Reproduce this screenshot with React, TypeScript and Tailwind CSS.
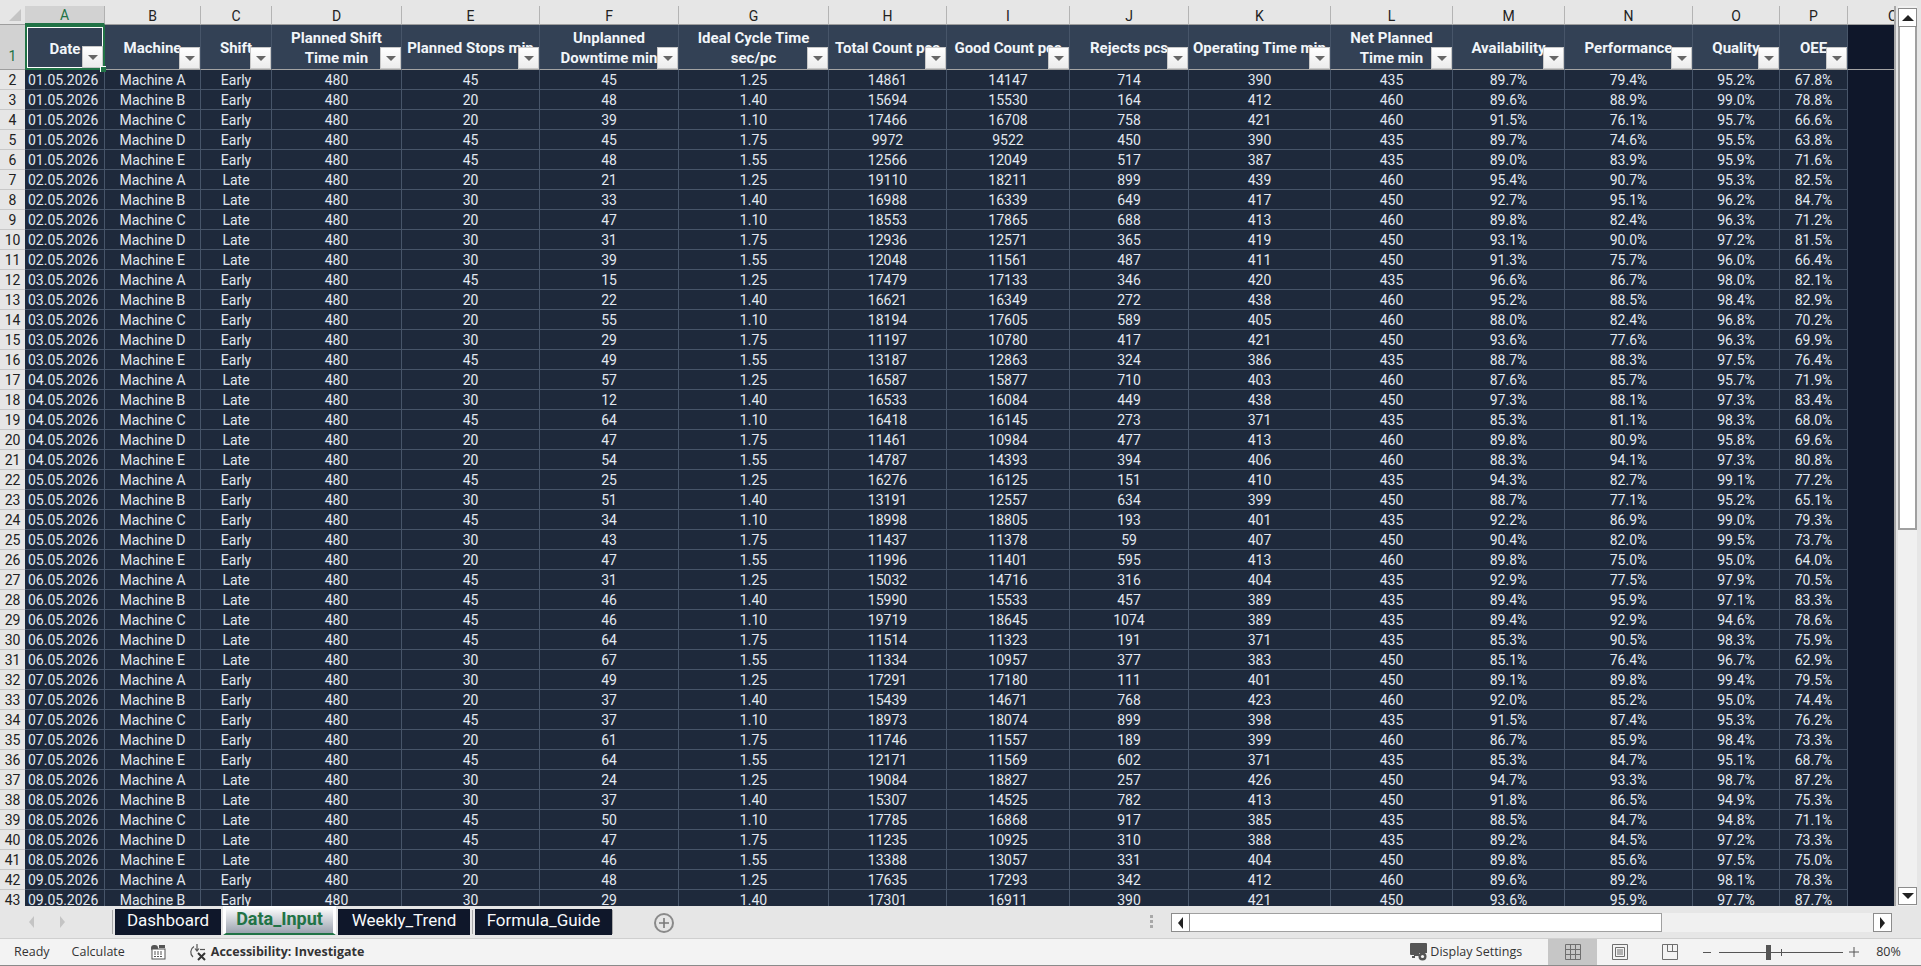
import React from 'react';

const letters = ['A', 'B', 'C', 'D', 'E', 'F', 'G', 'H', 'I', 'J', 'K', 'L', 'M', 'N', 'O', 'P'];

const headers = [
  'Date',
  'Machine',
  'Shift',
  'Planned Shift\nTime min',
  'Planned Stops min',
  'Unplanned\nDowntime min',
  'Ideal Cycle Time\nsec/pc',
  'Total Count pcs',
  'Good Count pcs',
  'Rejects pcs',
  'Operating Time min',
  'Net Planned\nTime min',
  'Availability',
  'Performance',
  'Quality',
  'OEE',
];

// date | machine | shift | stops | downtime | cycle | total | good | rejects | operating | net | A | P | Q | OEE
const raw = `01|A|Early|45|45|1.25|14861|14147|714|390|435|89.7|79.4|95.2|67.8
01|B|Early|20|48|1.40|15694|15530|164|412|460|89.6|88.9|99.0|78.8
01|C|Early|20|39|1.10|17466|16708|758|421|460|91.5|76.1|95.7|66.6
01|D|Early|45|45|1.75|9972|9522|450|390|435|89.7|74.6|95.5|63.8
01|E|Early|45|48|1.55|12566|12049|517|387|435|89.0|83.9|95.9|71.6
02|A|Late|20|21|1.25|19110|18211|899|439|460|95.4|90.7|95.3|82.5
02|B|Late|30|33|1.40|16988|16339|649|417|450|92.7|95.1|96.2|84.7
02|C|Late|20|47|1.10|18553|17865|688|413|460|89.8|82.4|96.3|71.2
02|D|Late|30|31|1.75|12936|12571|365|419|450|93.1|90.0|97.2|81.5
02|E|Late|30|39|1.55|12048|11561|487|411|450|91.3|75.7|96.0|66.4
03|A|Early|45|15|1.25|17479|17133|346|420|435|96.6|86.7|98.0|82.1
03|B|Early|20|22|1.40|16621|16349|272|438|460|95.2|88.5|98.4|82.9
03|C|Early|20|55|1.10|18194|17605|589|405|460|88.0|82.4|96.8|70.2
03|D|Early|30|29|1.75|11197|10780|417|421|450|93.6|77.6|96.3|69.9
03|E|Early|45|49|1.55|13187|12863|324|386|435|88.7|88.3|97.5|76.4
04|A|Late|20|57|1.25|16587|15877|710|403|460|87.6|85.7|95.7|71.9
04|B|Late|30|12|1.40|16533|16084|449|438|450|97.3|88.1|97.3|83.4
04|C|Late|45|64|1.10|16418|16145|273|371|435|85.3|81.1|98.3|68.0
04|D|Late|20|47|1.75|11461|10984|477|413|460|89.8|80.9|95.8|69.6
04|E|Late|20|54|1.55|14787|14393|394|406|460|88.3|94.1|97.3|80.8
05|A|Early|45|25|1.25|16276|16125|151|410|435|94.3|82.7|99.1|77.2
05|B|Early|30|51|1.40|13191|12557|634|399|450|88.7|77.1|95.2|65.1
05|C|Early|45|34|1.10|18998|18805|193|401|435|92.2|86.9|99.0|79.3
05|D|Early|30|43|1.75|11437|11378|59|407|450|90.4|82.0|99.5|73.7
05|E|Early|20|47|1.55|11996|11401|595|413|460|89.8|75.0|95.0|64.0
06|A|Late|45|31|1.25|15032|14716|316|404|435|92.9|77.5|97.9|70.5
06|B|Late|45|46|1.40|15990|15533|457|389|435|89.4|95.9|97.1|83.3
06|C|Late|45|46|1.10|19719|18645|1074|389|435|89.4|92.9|94.6|78.6
06|D|Late|45|64|1.75|11514|11323|191|371|435|85.3|90.5|98.3|75.9
06|E|Late|30|67|1.55|11334|10957|377|383|450|85.1|76.4|96.7|62.9
07|A|Early|30|49|1.25|17291|17180|111|401|450|89.1|89.8|99.4|79.5
07|B|Early|20|37|1.40|15439|14671|768|423|460|92.0|85.2|95.0|74.4
07|C|Early|45|37|1.10|18973|18074|899|398|435|91.5|87.4|95.3|76.2
07|D|Early|20|61|1.75|11746|11557|189|399|460|86.7|85.9|98.4|73.3
07|E|Early|45|64|1.55|12171|11569|602|371|435|85.3|84.7|95.1|68.7
08|A|Late|30|24|1.25|19084|18827|257|426|450|94.7|93.3|98.7|87.2
08|B|Late|30|37|1.40|15307|14525|782|413|450|91.8|86.5|94.9|75.3
08|C|Late|45|50|1.10|17785|16868|917|385|435|88.5|84.7|94.8|71.1
08|D|Late|45|47|1.75|11235|10925|310|388|435|89.2|84.5|97.2|73.3
08|E|Late|30|46|1.55|13388|13057|331|404|450|89.8|85.6|97.5|75.0
09|A|Early|20|48|1.25|17635|17293|342|412|460|89.6|89.2|98.1|78.3
09|B|Early|30|29|1.40|17301|16911|390|421|450|93.6|95.9|97.7|87.7`;

const rows = raw.split('\n').map((line) => {
  const p = line.split('|');
  return [
    `${p[0]}.05.2026`,
    `Machine ${p[1]}`,
    p[2],
    '480',
    p[3],
    p[4],
    p[5],
    p[6],
    p[7],
    p[8],
    p[9],
    p[10],
    `${p[11]}%`,
    `${p[12]}%`,
    `${p[13]}%`,
    `${p[14]}%`,
  ];
});

const FilterButton = () => (
  <div className="absolute right-0 bottom-0 w-[21px] h-[22px] bg-gradient-to-b from-white to-[#ececec] border border-[#c8c8c8] flex items-center justify-center">
    <div className="w-0 h-0 border-x-[5px] border-x-transparent border-t-[5px] border-t-[#666666]" />
  </div>
);

const ArrowButton = ({ dir, className }: { dir: 'up' | 'down' | 'left' | 'right'; className: string }) => {
  const shape = {
    up: 'border-x-[6px] border-x-transparent border-b-[6px] border-b-[#222222]',
    down: 'border-x-[6px] border-x-transparent border-t-[6px] border-t-[#222222]',
    left: 'border-y-[6px] border-y-transparent border-r-[5px] border-r-[#222222]',
    right: 'border-y-[6px] border-y-transparent border-l-[5px] border-l-[#222222]',
  }[dir];
  return (
    <div className={`flex items-center justify-center bg-white border border-[#8c8c8c] ${className}`}>
      <div className={`w-0 h-0 ${shape}`} />
    </div>
  );
};

const Sheet = () => (
  <div className="flex-1 min-w-0 overflow-hidden bg-[#0f172a] grid content-start grid-cols-[25px_80px_96px_71px_130px_138px_139px_150px_118px_123px_119px_142px_122px_112px_128px_87px_68px_46px] grid-rows-[19px_45px] auto-rows-[20px] font-[Roboto,sans-serif] text-[14px]">
    {/* column letters */}
    <div className="bg-[#e6e6e6] border-b border-[#9e9e9e] relative overflow-hidden">
      <div className="absolute right-[4px] bottom-[3px] w-0 h-0 border-l-[12px] border-l-transparent border-b-[12px] border-b-[#c4c4c4]" />
    </div>
    {letters.map((l, i) => (
      <div
        key={l}
        className={
          i === 0
            ? 'bg-[#d2d2d2] border-b-2 border-b-[#217346] text-[#217346] flex items-center justify-center pt-[2px] text-[14px] border-r border-r-[#b0b0b0]'
            : 'bg-[#e6e6e6] border-b border-b-[#9e9e9e] text-[#222222] flex items-center justify-center pt-[2px] text-[14px] border-r border-r-[#b4b4b4]'
        }
      >
        {l}
      </div>
    ))}
    <div className="bg-[#e6e6e6] border-b border-[#9e9e9e] text-[#222222] overflow-hidden pl-10 pt-px text-[14px] leading-[19px]">
      Q
    </div>

    {/* header row */}
    <div className="bg-[#d2d2d2] border-b border-[#9e9e9e] flex items-end justify-center text-[#217346] pb-[2px] text-[14px]">
      1
    </div>
    {headers.map((h, i) => (
      <div
        key={h}
        className={
          i === 0
            ? 'relative z-10 bg-[#334155] border-2 border-[#217346] outline outline-1 -outline-offset-3 outline-white flex items-center justify-center pt-[2px] text-center font-bold text-[15px] text-[#f1f5f9] leading-[20px]'
            : 'relative bg-[#334155] border-r border-[#475569] border-b border-b-[#a3a3a3] flex items-center justify-center pt-[2px] text-center font-bold text-[15px] text-[#f1f5f9] leading-[20px]'
        }
      >
        <span className="whitespace-pre">{h}</span>
        <FilterButton />
        {i === 0 && (
          <div className="absolute -right-[3px] -bottom-[4px] w-[6px] h-[6px] bg-[#217346] border-l border-t border-white" />
        )}
      </div>
    ))}
    <div className="border-b border-[#a3a3a3]" />

    {/* data rows */}
    {rows.map((r, i) => (
      <React.Fragment key={i}>
        <div className="bg-[#e6e6e6] border-b border-[#c8c8c8] text-[#222222] flex items-center justify-center pt-[2px] text-[14px]">
          {i + 2}
        </div>
        {r.map((v, j) => (
          <div
            key={j}
            className={
              j === 0
                ? 'bg-[#1e293b] border-r border-b border-[#475569] text-[#e2e8f0] flex items-center pt-[2px] pl-[3px] whitespace-nowrap'
                : 'bg-[#1e293b] border-r border-b border-[#475569] text-[#e2e8f0] flex items-center justify-center pt-[2px] whitespace-nowrap'
            }
          >
            {v}
          </div>
        ))}
        <div />
      </React.Fragment>
    ))}
  </div>
);

const VerticalScrollbar = () => (
  <div className="w-[27px] shrink-0 flex bg-[#e6e6e6]">
    <div className="w-[2px] bg-[#a8a8a8]" />
    <div className="w-[2px]" />
    <div className="w-[19px] flex flex-col bg-[#f0f0f0]">
      <ArrowButton dir="up" className="h-[19px] mt-[2px] shrink-0" />
      <div className="h-[503px] bg-white border-2 border-t-0 border-[#a0a0a0]" />
      <div className="flex-1" />
      <ArrowButton dir="down" className="h-[18px] mb-[1px] shrink-0" />
    </div>
    <div className="w-[4px]" />
  </div>
);

const SheetTab = ({ label }: { label: string }) => (
  <div className="h-[26px] mt-[3px] pb-[3px] bg-[#0f172a] text-[#f8fafc] flex items-center justify-center text-[17px] leading-none">
    {label}
  </div>
);

const TabBar = () => (
  <div className="h-[32px] bg-[#e6e6e6] flex items-start font-[Roboto,sans-serif] shrink-0">
    <div className="w-[112px] h-full flex items-center pl-[29px] gap-[26px]">
      <div className="w-0 h-0 border-y-[6px] border-y-transparent border-r-[5px] border-r-[#c4c4c4]" />
      <div className="w-0 h-0 border-y-[6px] border-y-transparent border-l-[5px] border-l-[#c4c4c4]" />
    </div>
    <div className="w-px h-[24px] mt-[4px] bg-[#a8a8a8] mr-[2px]" />
    <div className="w-[106px]">
      <SheetTab label="Dashboard" />
    </div>
    <div className="w-[113px] h-[29px] ml-[2px] bg-white border-x-[3px] border-t border-white border-b-2 border-b-[#217346] mr-[2px]">
      <div className="h-full pb-[2px] bg-gradient-to-b from-white to-[#9ca3af] text-[#217346] font-bold text-[18px] flex items-center justify-center leading-none">
        Data_Input
      </div>
    </div>
    <div className="w-[132px]">
      <SheetTab label="Weekly_Trend" />
    </div>
    <div className="w-px h-[24px] mt-[4px] bg-[#a8a8a8] mx-[2px]" />
    <div className="w-[137px]">
      <SheetTab label="Formula_Guide" />
    </div>
    <div className="w-px h-[24px] mt-[4px] bg-[#a8a8a8]" />
    <div className="w-[20px] h-[20px] mt-[7px] ml-[41px] rounded-full border-2 border-[#8a8a8a] flex items-center justify-center text-[#7a7a7a]">
      <svg width="12" height="12" viewBox="0 0 12 12">
        <path d="M6 1v10M1 6h10" stroke="#7a7a7a" strokeWidth="1.6" />
      </svg>
    </div>
    <div className="ml-[476px] mt-[9px] flex flex-col gap-[2px]">
      <div className="w-[3px] h-[3px] bg-[#a8a8a8]" />
      <div className="w-[3px] h-[3px] bg-[#a8a8a8]" />
      <div className="w-[3px] h-[3px] bg-[#a8a8a8]" />
    </div>
    <div className="ml-[18px] mt-[7px] h-[19px] flex w-[721px] bg-[#f0f0f0]">
      <ArrowButton dir="left" className="w-[19px] shrink-0" />
      <div className="w-[472px] bg-white border-y border-r border-[#a0a0a0]" />
      <div className="flex-1" />
      <ArrowButton dir="right" className="w-[19px] shrink-0" />
    </div>
  </div>
);

const StatusBar = () => (
  <div className="h-[28px] bg-[#f3f3f3] border-t border-[#cfcfcf] border-b border-b-[#8a8a8a] flex items-center font-['Open_Sans',sans-serif] text-[12.5px] text-[#333333] shrink-0">
    <span className="ml-[14px]">Ready</span>
    <span className="ml-[22px]">Calculate</span>
    <svg className="ml-[25px]" width="16" height="16" viewBox="0 0 16 16">
      <rect x="1" y="1" width="7" height="6" rx="3" fill="#555555" />
      <rect x="9" y="1" width="6" height="3" fill="#555555" />
      <rect x="2" y="5" width="13" height="10" fill="#ffffff" stroke="#555555" />
      <path d="M4 8h2M7 8h2M10 8h2M4 10h2M7 10h2M10 10h2M4 12.5h2M7 12.5h2M10 12.5h2" stroke="#555555" />
    </svg>
    <svg className="ml-[22px]" width="20" height="20" viewBox="0 0 20 20" fill="none">
      <path d="M6 4.5a6.5 6.5 0 0 0-1 10.5M9 2v7M7 6.5l2 2.5 2-2.5" stroke="#555555" strokeWidth="1.2" />
      <path d="M12 7.5h5" stroke="#555555" strokeWidth="1.2" />
      <path d="M10 11l7 7M17 11l-7 7" stroke="#333333" strokeWidth="2" />
    </svg>
    <span className="ml-[3px] font-bold">Accessibility: Investigate</span>
    <svg className="ml-[1045px]" width="20" height="20" viewBox="0 0 20 20">
      <path d="M1 2a1 1 0 0 1 1-1h15a1 1 0 0 1 1 1v9H10v3H6v2H3v-2h2v-1H2a1 1 0 0 1-1-1z" fill="#555555" />
      <circle cx="13.5" cy="14.5" r="4" fill="#555555" />
      <circle cx="13.5" cy="14.5" r="1.6" fill="#f3f3f3" />
    </svg>
    <span className="ml-[1px]">Display Settings</span>
    <div className="ml-[26px] w-[49px] h-full bg-[#c6c6c6] flex items-center justify-center">
      <svg width="16" height="16" viewBox="0 0 16 16" fill="none" stroke="#6e6e6e">
        <path d="M.5.5h15v15H.5zM5.5.5v15M10.5.5v15M.5 5.5h15M.5 10.5h15" />
      </svg>
    </div>
    <svg className="ml-[15px]" width="16" height="16" viewBox="0 0 16 16" fill="none" stroke="#6e6e6e">
      <path d="M.5.5h15v15H.5z" />
      <path d="M3.5 3.5h9v9h-9zM5 6h6M5 8h6M5 10h6" />
    </svg>
    <svg className="ml-[34px]" width="16" height="16" viewBox="0 0 16 16" fill="none" stroke="#6e6e6e">
      <path d="M.5.5h15v15H.5zM5.5.5v7h10M10.5.5v7" />
    </svg>
    <div className="ml-[25px] w-[8px] h-px bg-[#555555]" />
    <div className="ml-[8px] w-[124px] h-px bg-[#555555] relative">
      <div className="absolute left-[62px] -top-[3px] w-px h-[7px] bg-[#555555]" />
      <div className="absolute left-[47px] -top-[7px] w-[5px] h-[15px] bg-[#555555]" />
    </div>
    <svg className="ml-[6px]" width="10" height="10" viewBox="0 0 10 10">
      <path d="M5 0v10M0 5h10" stroke="#555555" />
    </svg>
    <span className="ml-[17px]">80%</span>
  </div>
);

export default function App() {
  return (
    <div className="w-[1921px] h-[966px] overflow-hidden flex flex-col bg-[#e6e6e6]">
      <div className="h-[6px] shrink-0 bg-[#e6e6e6]" />
      <div className="flex-1 min-h-0 flex">
        <Sheet />
        <VerticalScrollbar />
      </div>
      <TabBar />
      <StatusBar />
    </div>
  );
}
